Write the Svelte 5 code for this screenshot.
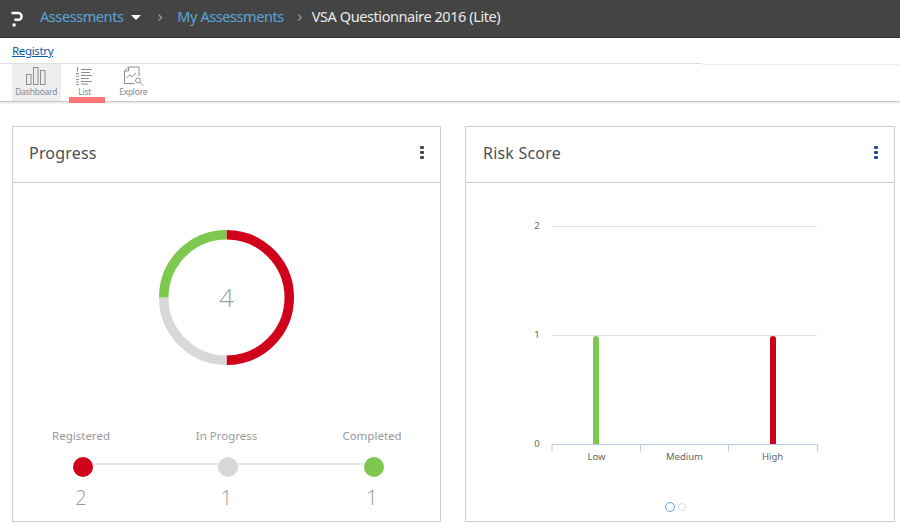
<script>
  const stats = [
    { label: 'Registered', value: 2, color: '#d0021b' },
    { label: 'In Progress', value: 1, color: '#d8d8d8' },
    { label: 'Completed', value: 1, color: '#7ec850' }
  ];
</script>

<div class="page">
  <header class="top">
    <svg class="logo" width="12" height="16" viewBox="0 0 12 16" aria-hidden="true">
      <path d="M0.500 2h6.700a3.200 3.200 0 0 1 0 6.800H3.400" fill="none" stroke="#fff" stroke-width="2.400" />
      <rect x="1.600" y="12.500" width="3" height="3" fill="#fff" />
    </svg>
    <a class="crumb first">Assessments</a>
    <span class="caret"></span>
    <span class="sep first-sep">›</span>
    <a class="crumb">My Assessments</a>
    <span class="sep second-sep">›</span>
    <span class="title">VSA Questionnaire 2016 (Lite)</span>
  </header>

  <div class="sub"><a class="reg">Registry</a></div>
  <div class="rule"><i></i><b></b></div>

  <nav class="tabs">
    <div class="tab active">
      <svg width="22" height="20" viewBox="0 0 22 20" aria-hidden="true">
        <g fill="none" stroke="#8a8f96" stroke-width="1">
          <rect x="1.500" y="8.500" width="4.500" height="10" /><rect x="8.500" y="1.500" width="4.500" height="17" /><rect x="15.500" y="4.500" width="4.500" height="14" />
        </g>
      </svg>
      <span>Dashboard</span>
    </div>
    <div class="tab current">
      <svg width="22" height="20" viewBox="0 0 22 20" aria-hidden="true">
        <g stroke="#8a8f96" stroke-width="1">
          <path d="M7 3.500h11M7 6.500h9M7 9.500h11M7 12.500h8M7 15.500h11M7 18h7" />
          <path d="M3.500 1v4.500M2 10h3M2 7.500h3M2 13.500h3M2 16h3M2 18.500h3" />
        </g>
      </svg>
      <span>List</span>
    </div>
    <div class="tab">
      <svg width="22" height="20" viewBox="0 0 22 20" aria-hidden="true">
        <g fill="none" stroke="#8a8f96" stroke-width="1">
          <path d="M2.500 17.500V5l4-4h10.500v9" /><path d="M2.500 5h4V1" /><path d="M2.500 17.500h10" />
          <path d="M4.500 12l3-3 2.500 1.500 4-3.500" />
          <circle cx="16" cy="14.500" r="2.500" /><path d="M18 16.500l3 3" />
        </g>
      </svg>
      <span>Explore</span>
    </div>
  </nav>

  <main class="cards">
    <section class="card">
      <div class="head">
        <h2>Progress</h2>
        <span class="dots dark"><i></i><i></i><i></i></span>
      </div>
      <div class="body">
        <svg class="donut" width="135" height="135" viewBox="0 0 135 135" role="img" aria-label="Progress donut">
          <g fill="none" stroke-width="9.500">
            <path d="M67.500 4.750A62.750 62.750 0 0 1 67.500 130.250" stroke="#d0021b" />
            <path d="M67.500 130.250A62.750 62.750 0 0 1 4.750 67.500" stroke="#d8d8d8" />
            <path d="M4.750 67.500A62.750 62.750 0 0 1 67.500 4.750" stroke="#7ec850" />
          </g>
          <text x="67.500" y="76.500" text-anchor="middle" class="total">4</text>
        </svg>
        <div class="stats">
          {#each stats as s}
            <div class="stat">
              <span class="lab">{s.label}</span>
              <span class="dot" style="background:{s.color}"></span>
              <span class="num">{s.value}</span>
            </div>
          {/each}
        </div>
      </div>
    </section>

    <section class="card right">
      <div class="head">
        <h2>Risk Score</h2>
        <span class="dots blue"><i></i><i></i><i></i></span>
      </div>
      <svg class="chart" width="428" height="338" viewBox="466 183 428 338" role="img" aria-label="Risk score chart">
        <g stroke="#dfe3e6" stroke-width="1">
          <path d="M552 226.500H817M552 335.500H817" />
        </g>
        <g class="ylab" text-anchor="middle">
          <text x="537" y="229">2</text>
          <text x="537" y="338">1</text>
          <text x="537" y="447">0</text>
        </g>
        <path d="M593 444v-105a3 3 0 0 1 6 0v105z" fill="#7ec850" />
        <path d="M770 444v-105a3 3 0 0 1 6 0v105z" fill="#d0021b" />
        <path d="M552 451.500v-7H817.500v7M640.500 444.500v7M728.500 444.500v7" fill="none" stroke="#b9cde0" stroke-width="1" />
        <g class="xlab" text-anchor="middle">
          <text x="596.500" y="459.500">Low</text>
          <text x="684.500" y="459.500">Medium</text>
          <text x="772.500" y="459.500">High</text>
        </g>
        <circle cx="670" cy="507" r="4.500" fill="none" stroke="#5ea3d8" stroke-width="1" />
        <circle cx="682" cy="507" r="3.500" fill="none" stroke="#dcdfe2" stroke-width="1" />
      </svg>
    </section>
  </main>
</div>

<style>
  :global(body) {
    margin: 0;
    background: #fff;
  }
  .page {
    width: 900px;
    height: 524px;
    overflow: hidden;
    font-family: "Noto Sans", "Open Sans", sans-serif;
  }
  .top {
    height: 37px;
    background: #444;
    border-bottom: 1px solid #2f2f2f;
    display: flex;
    align-items: center;
    padding-left: 11px;
    font-size: 14.500px;
    letter-spacing: -0.42px;
    line-height: 33px;
  }
  .top a,
  .top span {
    margin-bottom: 4px;
  }
  .logo {
    margin-right: 17px;
    margin-top: 1px;
  }
  .crumb {
    color: #5ba5da;
  }
  .top .caret {
    width: 0;
    height: 0;
    border-left: 5px solid transparent;
    border-right: 5px solid transparent;
    border-top: 5px solid #fff;
    margin-left: 8px;
    margin-bottom: 2px;
  }
  .top .sep {
    color: #9a9a9a;
    font-size: 17px;
    line-height: 1;
    margin-bottom: 6px;
  }
  .top .first-sep {
    margin-left: 16px;
    margin-right: 15px;
  }
  .top .second-sep {
    margin-left: 13px;
    margin-right: 10px;
  }
  .title {
    color: #eaeaea;
  }
  .sub {
    height: 25px;
    display: flex;
    align-items: center;
    padding-left: 12px;
    font-size: 11.500px;
    letter-spacing: -0.35px;
  }
  .reg {
    color: #0b5aa8;
    text-decoration: underline;
  }
  .rule {
    display: flex;
    height: 2px;
  }
  .rule i {
    display: block;
    width: 702px;
    height: 1px;
    background: #e2e2e2;
  }
  .rule b {
    display: block;
    flex: 1;
    height: 1px;
    margin-top: 1px;
    background: #eeeeee;
  }
  .tabs {
    height: 37px;
    margin-top: -1px;
    padding-left: 12px;
    display: flex;
    border-bottom: 1px solid #c9c9c9;
    box-shadow: 0 1px 2px rgba(0, 0, 0, 0.12);
    position: relative;
  }
  .tab {
    width: 48.500px;
    height: 37px;
    display: flex;
    flex-direction: column;
    align-items: center;
    padding-top: 2px;
    box-sizing: border-box;
    position: relative;
    color: #858b92;
    font-size: 8.500px;
    line-height: 11px;
    letter-spacing: -0.25px;
  }
  .active {
    background: #eeeeee;
  }
  .current::after {
    content: "";
    position: absolute;
    left: 8px;
    width: 36px;
    top: 33px;
    height: 6px;
    background: #fb7676;
  }
  .cards {
    display: grid;
    grid-template-columns: 429px 430px;
    column-gap: 24px;
    padding: 24px 0 0 12px;
  }
  .card {
    height: 396px;
    box-sizing: border-box;
    border: 1px solid #cfcfcf;
    background: #fff;
  }
  .head {
    height: 56px;
    border-bottom: 1px solid #c9c9c9;
    box-sizing: border-box;
    display: flex;
    align-items: center;
    justify-content: space-between;
    padding: 0 16px 4px 16px;
  }
  .right .head {
    padding-left: 17px;
  }
  h2 {
    margin: 0;
    font-size: 16px;
    font-weight: 400;
    color: #4a4f55;
    letter-spacing: 0.2px;
  }
  .dots {
    display: flex;
    flex-direction: column;
    gap: 1.500px;
  }
  .dots i {
    display: block;
    width: 4px;
    height: 3.500px;
    border-radius: 1px;
    background: #3d4c4c;
  }
  .dots.blue i {
    background: #1f4c96;
  }
  .body {
    display: flex;
    flex-direction: column;
    align-items: center;
  }
  .donut {
    margin-top: 47px;
    display: block;
  }
  .total {
    font-size: 26px;
    font-family: "Open Sans", sans-serif;
    font-weight: 300;
    fill: #9aa1a9;
  }
  .stats {
    width: 361px;
    margin-top: 64px;
    display: flex;
    justify-content: space-between;
    background: linear-gradient(#e8e8e8, #e8e8e8) no-repeat 37px 34px / 290px 2px;
  }
  .stat {
    width: 70px;
    display: flex;
    flex-direction: column;
    align-items: center;
  }
  .lab {
    font-size: 11.500px;
    line-height: 14px;
    color: #999;
  }
  .dot {
    width: 20px;
    height: 20px;
    border-radius: 50%;
    margin-top: 14px;
    margin-left: 3px;
  }
  .num {
    font-size: 20px;
    font-family: "Open Sans", sans-serif;
    font-weight: 300;
    line-height: 22px;
    margin-top: 10px;
    color: #999;
  }
  .chart {
    display: block;
  }
  .ylab text,
  .xlab text {
    font-size: 9.500px;
    fill: #666;
  }
</style>
